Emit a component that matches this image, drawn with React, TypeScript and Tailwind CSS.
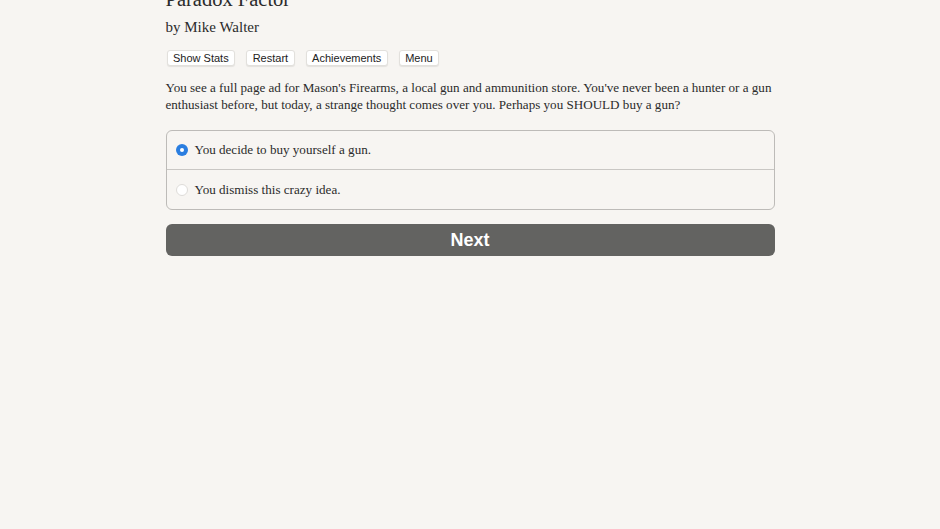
import React from "react";

export default function App() {
  const serif = { fontFamily: '"Liberation Serif", "DejaVu Serif", serif' };
  return (
    <div className="min-h-[529px] w-full bg-[#f7f5f2] overflow-hidden">
      <div className="mx-auto w-[609px] pt-0" style={serif}>
        <h1 className="mt-[-13px] text-[20.5px] leading-[25px] text-[#2b2b2b]">Paradox Factor</h1>
        <div className="mt-[5px] text-[15px] leading-[20px] text-[#2b2b2b]">by Mike Walter</div>
        <div className="mt-[13px] flex gap-[11px] pl-[1px]" style={{ fontFamily: '"Liberation Sans", Arial, sans-serif' }}>
          {["Show Stats", "Restart", "Achievements", "Menu"].map((t) => (
            <button key={t} className="h-[16px] rounded-[3px] border border-[#e2e0dc] bg-white px-[5.5px] text-[11px] leading-[14px] text-[#222] shadow-[0_1px_1px_rgba(0,0,0,0.08)]">
              {t}
            </button>
          ))}
        </div>
        <p className="mt-[13px] text-[13.1px] leading-[17px] text-[#2b2b2b]">
          You see a full page ad for Mason's Firearms, a local gun and ammunition store. You've never been a hunter or a gun enthusiast before, but today, a strange thought comes over you. Perhaps you SHOULD buy a gun?
        </p>
        <div className="mt-[17px] rounded-[6px] border border-[#bdbbb8] text-[13.1px] text-[#2b2b2b]">
          <label className="flex h-[39px] items-center border-b border-[#c9c7c4] pl-[9px]">
            <span className="mr-[7px] flex h-[12px] w-[12px] items-center justify-center rounded-full bg-[#2a7ee0]">
              <span className="h-[4px] w-[4px] rounded-full bg-white" />
            </span>
            You decide to buy yourself a gun.
          </label>
          <label className="flex h-[39px] items-center pl-[9px]">
            <span className="mr-[7px] h-[12px] w-[12px] rounded-full border border-[#dedcd9] bg-white" />
            You dismiss this crazy idea.
          </label>
        </div>
        <button
          className="mt-[14px] flex h-[32px] w-full items-center justify-center rounded-[6px] bg-[#636361] text-[18px] font-bold text-white"
          style={{ fontFamily: '"Liberation Sans", Arial, sans-serif' }}
        >
          Next
        </button>
      </div>
    </div>
  );
}
